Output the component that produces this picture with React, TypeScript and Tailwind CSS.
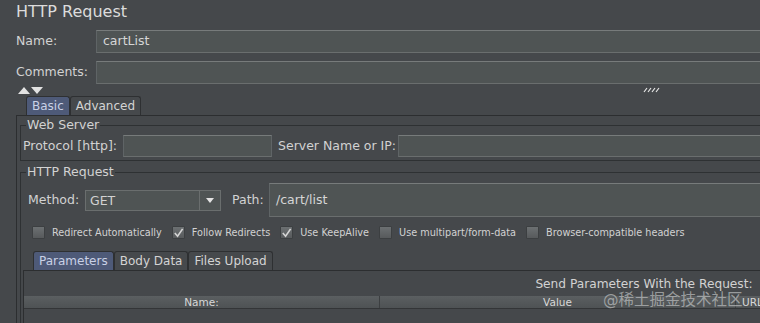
import React from "react";

function Field({ className = "", children }: { className?: string; children?: React.ReactNode }) {
  return (
    <div
      className={`flex items-center bg-[#4f5454] border border-[#5f6466] border-t-[#777b7b] border-b-[#6a6e6e] text-[12.5px] text-[#d6d6d6] ${className}`}
    >
      {children}
    </div>
  );
}

function Check({ checked }: { checked?: boolean }) {
  return (
    <span className="w-[13px] h-[13px] shrink-0 flex items-center justify-center rounded-[1px] border border-[#3c3f41] bg-gradient-to-b from-[#6c7072] to-[#575a5c]">
      {checked && (
        <svg width="12" height="12" viewBox="0 0 12 12">
          <path d="M2 6 L5 9.5 L10.5 1.5" fill="none" stroke="#d4d4d4" strokeWidth="1.8" />
        </svg>
      )}
    </span>
  );
}

function Tab({ label, active }: { label: string; active?: boolean }) {
  return (
    <div
      className={`h-[19px] px-[5px] rounded-t-[3px] border border-b-0 border-[#2e3032] text-[12px] leading-[18px] ${
        active ? "bg-[#4e5a78] text-[#c9d1e6]" : "bg-[#46494c] text-[#d4d4d4]"
      }`}
    >
      {label}
    </div>
  );
}

function Option({ label, checked }: { label: string; checked?: boolean }) {
  return (
    <div className="flex items-center gap-[7px]">
      <Check checked={checked} />
      <span>{label}</span>
    </div>
  );
}

export default function App() {
  return (
    <div className="relative w-[760px] h-[323px] overflow-hidden bg-[#45484b] text-[#d2d2d2] font-['DejaVu_Sans','Noto_Sans_CJK_SC',sans-serif]">
      <div className="w-[1286px]">
        <div className="h-[28px] pl-[16px] pt-[2px] text-[16px] leading-[20px] text-[#dcdcdc]">HTTP Request</div>

        <div className="flex items-center h-[23px] mt-[2px]">
          <div className="w-[96px] pl-[16px] text-[12.5px]">Name:</div>
          <Field className="flex-1 h-[23px] pl-[6px]">cartList</Field>
        </div>

        <div className="flex items-center h-[23px] mt-[8px]">
          <div className="w-[96px] pl-[16px] text-[12.5px]">Comments:</div>
          <Field className="flex-1 h-[23px]" />
        </div>

        <div className="flex items-center h-[12px]">
          <div className="flex pl-[18px] gap-[1px]">
            <svg width="12" height="7" viewBox="0 0 12 7">
              <path d="M0 7 L6 0 L12 7 Z" fill="#e2e2e2" />
            </svg>
            <svg width="12" height="7" viewBox="0 0 12 7">
              <path d="M0 0 L12 0 L6 7 Z" fill="#e2e2e2" />
            </svg>
          </div>
          <div className="flex-1 flex justify-center pr-[26px]">
            <svg width="18" height="6" viewBox="0 0 18 6">
              <path d="M1 5 L4 1 M5 5 L8 1 M9 5 L12 1 M13 5 L16 1" stroke="#e6e6e6" strokeWidth="1.2" />
            </svg>
          </div>
        </div>

        <div className="flex items-end h-[19px] pl-[26px]">
          <Tab label="Basic" active />
          <Tab label="Advanced" />
        </div>

        <div className="ml-[16px] mr-[16px] border-l border-t border-[#2c2e30] pl-[3px] pr-[3px]">
          <fieldset className="mt-[2px] border border-[#2e3133] px-[2px] pb-[3px]">
            <legend className="ml-[3px] px-[1px] text-[12.5px] leading-[14px]">Web Server</legend>
            <div className="flex items-center h-[22px] mt-[3px] text-[12.5px]">
              <div className="w-[100px]">Protocol [http]:</div>
              <Field className="w-[149px] h-[22px]" />
              <div className="w-[120px] ml-[6px]">Server Name or IP:</div>
              <Field className="flex-1 h-[22px]" />
            </div>
          </fieldset>

          <fieldset className="mt-[4px] border border-[#2e3133] px-[2px] pb-[6px]">
            <legend className="ml-[3px] px-[1px] text-[12.5px] leading-[14px]">HTTP Request</legend>
            <div className="flex items-center h-[34px] mt-[4px] pl-[5px] text-[12.5px]">
              <div className="w-[57px]">Method:</div>
              <div className="flex w-[136px] h-[21px] bg-[#4f5454] border border-[#6a6e6e]">
                <div className="flex-1 pl-[4px] leading-[19px]">GET</div>
                <div className="w-[21px] border-l border-[#6a6e6e] flex items-center justify-center">
                  <svg width="8" height="5" viewBox="0 0 8 5">
                    <path d="M0 0 L8 0 L4 5 Z" fill="#e4e4e4" />
                  </svg>
                </div>
              </div>
              <div className="w-[37px] ml-[11px]">Path:</div>
              <Field className="flex-1 h-[34px] pl-[6px]">/cart/list</Field>
            </div>

            <div className="flex items-center h-[18px] mt-[7px] pl-[9px] gap-[10px] text-[9.7px]">
              <Option label="Redirect Automatically" />
              <Option label="Follow Redirects" checked />
              <Option label="Use KeepAlive" checked />
              <Option label="Use multipart/form-data" />
              <Option label="Browser-compatible headers" />
            </div>

            <div className="flex items-end h-[19px] mt-[9px] pl-[10px]">
              <Tab label="Parameters" active />
              <Tab label="Body Data" />
              <Tab label="Files Upload" />
            </div>

            <div className="border-l border-t border-[#2c2e30] h-[60px]">
              <div className="pt-[5px] text-center text-[12.2px] leading-[16px]">Send Parameters With the Request:</div>
              <div className="flex h-[13px] mt-[4px] bg-gradient-to-b from-[#5b5f61] to-[#4e5254] border-b border-[#333537] text-[10.5px] leading-[13px] text-[#d8d8d8]">
                <div className="w-[356px] text-center border-r border-[#3c3f41]">Name:</div>
                <div className="w-[356px] text-center border-r border-[#3c3f41]">Value</div>
                <div className="w-[160px] pl-[6px] border-r border-[#3c3f41]">URL Encode?</div>
                <div className="w-[180px] text-center border-r border-[#3c3f41]">Content-Type</div>
                <div className="flex-1 text-center">Include Equals?</div>
              </div>
            </div>
          </fieldset>
        </div>
      </div>

      <div className="absolute left-[603px] top-[290px] text-[15.5px] leading-[20px] text-[#bfc1c2]/70">@稀土掘金技术社区</div>
    </div>
  );
}
